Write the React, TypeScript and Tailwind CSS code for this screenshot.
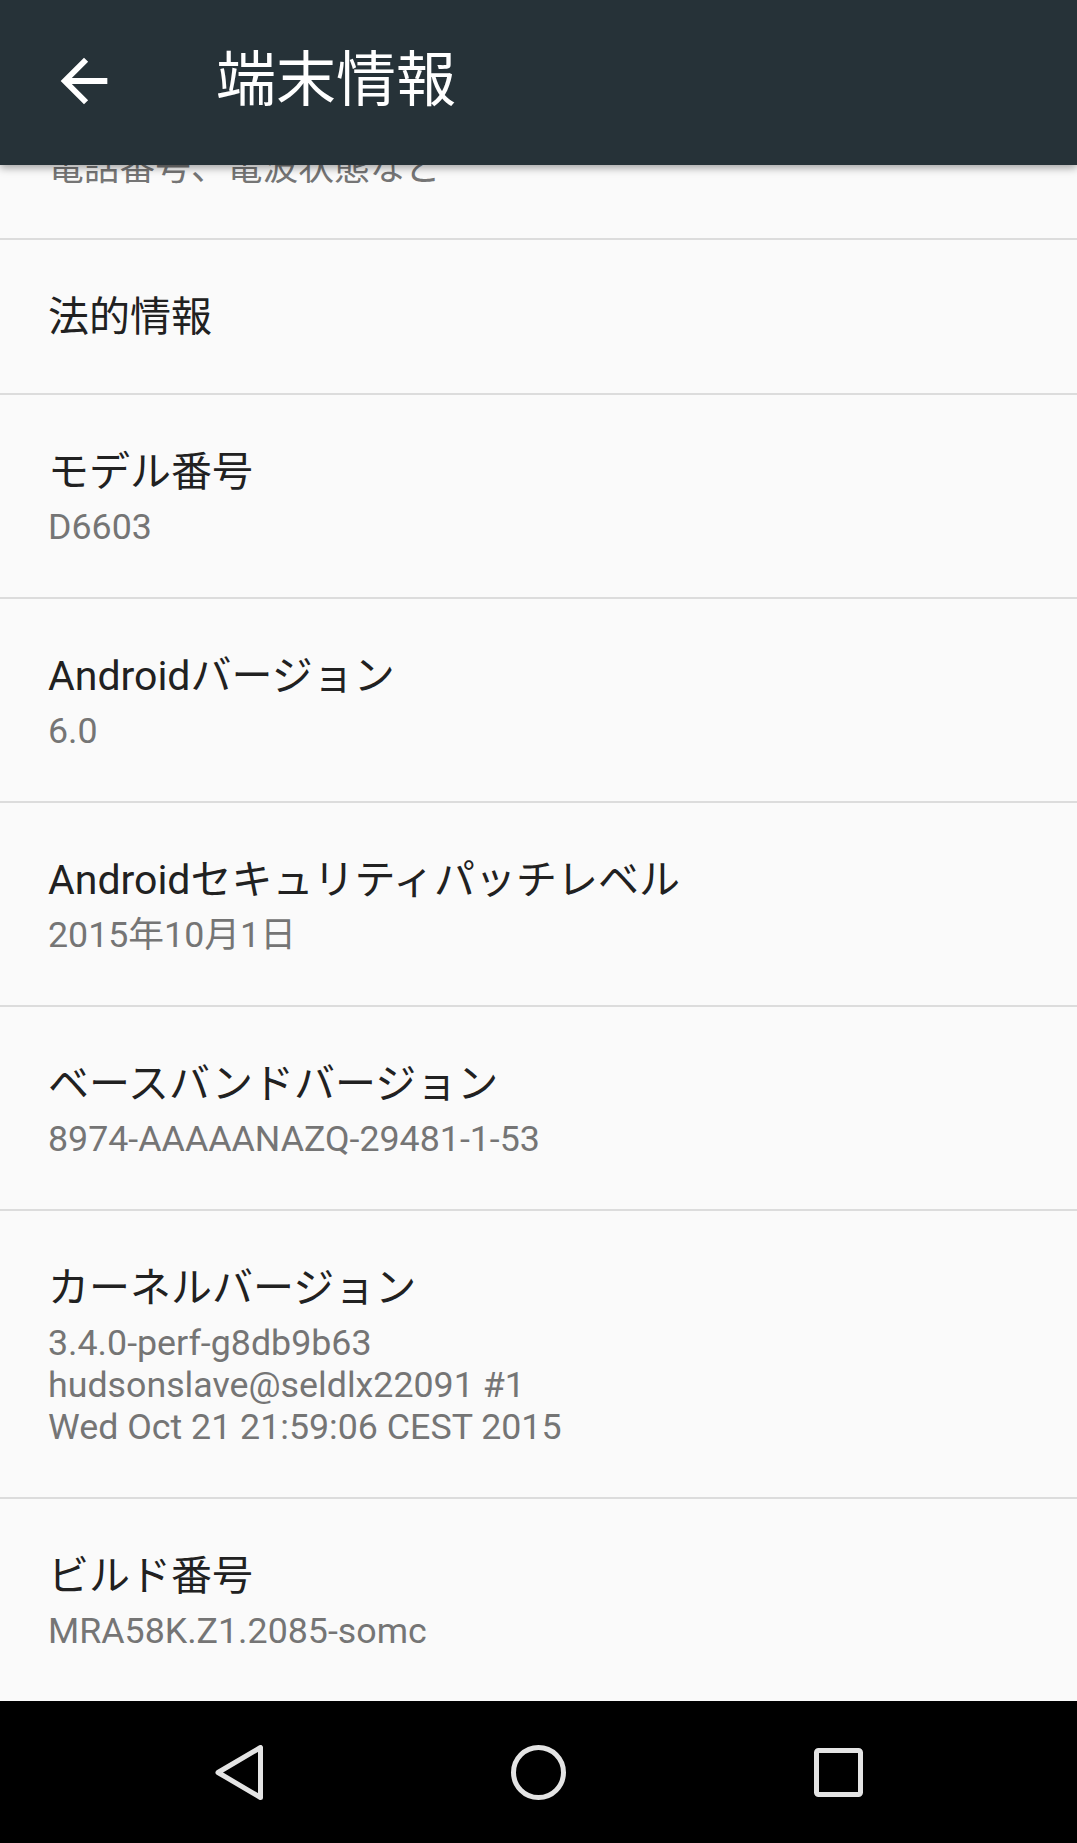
const font = { fontFamily: 'Roboto, "Noto Sans CJK JP", sans-serif' };

type Item = { title: string; summary?: string[] };

const items: Item[] = [
  { title: "法的情報" },
  { title: "モデル番号", summary: ["D6603"] },
  { title: "Androidバージョン", summary: ["6.0"] },
  { title: "Androidセキュリティパッチレベル", summary: ["2015年10月1日"] },
  { title: "ベースバンドバージョン", summary: ["8974-AAAAANAZQ-29481-1-53"] },
  {
    title: "カーネルバージョン",
    summary: [
      "3.4.0-perf-g8db9b63",
      "hudsonslave@seldlx22091 #1",
      "Wed Oct 21 21:59:06 CEST 2015",
    ],
  },
  { title: "ビルド番号", summary: ["MRA58K.Z1.2085-somc"] },
];

function Row({ item }: { item: Item }) {
  return (
    <div className={item.summary ? "pl-[48px] pt-[53px] pb-[49px]" : "pl-[48px] pt-[53px] pb-[48px]"}>
      <div className="h-[52px] text-[41px] leading-[48px] text-[#212121] whitespace-nowrap">
        {item.title}
      </div>
      {item.summary && (
        <div className="mt-[6px] text-[35.75px] text-[#757575]">
          {item.summary.map((line) => (
            <div key={line} className="h-[42px] leading-[42px] whitespace-nowrap">
              {line}
            </div>
          ))}
        </div>
      )}
    </div>
  );
}

function Header() {
  return (
    <header className="relative z-10 flex h-[165px] items-center bg-[#263238] pl-[49px] pb-[4px] shadow-[0_3px_8px_rgba(0,0,0,0.35)]">
      <svg viewBox="0 0 24 24" className="h-[70px] w-[70px] fill-white">
        <path d="M20 11H7.83l5.59-5.59L12 4l-8 8 8 8 1.41-1.41L7.83 13H20v-2z" />
      </svg>
      <h1 className="ml-[97px] text-[60px] leading-none font-normal text-white">端末情報</h1>
    </header>
  );
}

function NavBar() {
  return (
    <nav className="flex h-[142px] items-center justify-center bg-black">
      <div className="flex w-[300px] justify-center">
        <svg width="48" height="55" viewBox="0 0 48 55" fill="none" stroke="#e4e4e4" strokeWidth="5" strokeLinejoin="round">
          <polygon points="3,27.5 45.5,2.5 45.5,52.5" />
        </svg>
      </div>
      <div className="flex w-[300px] justify-center">
        <svg width="55" height="55" viewBox="0 0 55 55" fill="none" stroke="#e4e4e4" strokeWidth="5">
          <circle cx="27.5" cy="27.5" r="25" />
        </svg>
      </div>
      <div className="flex w-[300px] justify-center">
        <svg width="49" height="49" viewBox="0 0 49 49" fill="none" stroke="#e4e4e4" strokeWidth="5">
          <rect x="2.5" y="2.5" width="44" height="44" rx="2" />
        </svg>
      </div>
    </nav>
  );
}

export default function App() {
  return (
    <div className="min-h-screen bg-[#fafafa]" style={font}>
      <Header />
      <main>
        <div className="flex h-[75px] flex-col justify-end overflow-hidden border-b-2 border-[#dcdcdc]">
          <div className="shrink-0">
            <Row item={{ title: "端末の状態", summary: ["電話番号、電波状態など"] }} />
          </div>
        </div>
        {items.map((item, i) => (
          <div key={item.title} className={i < items.length - 1 ? "border-b-2 border-[#dcdcdc]" : ""}>
            <Row item={item} />
          </div>
        ))}
      </main>
      <NavBar />
    </div>
  );
}
